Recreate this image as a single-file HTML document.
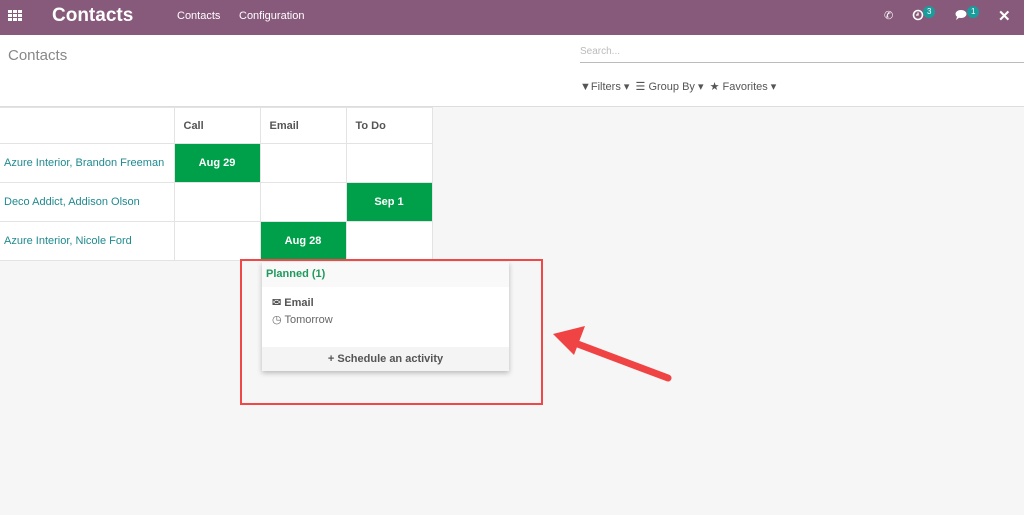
<!DOCTYPE html>
<html><head><style>
body{margin:0;width:1024px;height:515px;background:#f6f6f6;font-family:"Liberation Sans",sans-serif;position:relative;overflow:hidden;font-size:11px}
.nav{position:absolute;left:0;top:0;width:1024px;height:35px;background:#875a7b;color:#fff}
.abs{position:absolute}
.cp{position:absolute;left:0;top:35px;width:1024px;height:71px;background:#fff;border-bottom:1px solid #ddd}
table{position:absolute;left:0;top:107px;border-collapse:collapse;background:#fff;table-layout:fixed;width:432px}
td{border:1px solid #e3e3e3;padding:0;height:39px;font-size:11px;box-sizing:border-box}
th{border:1px solid #e3e3e3;height:36px;text-align:left;padding:0 0 0 9px;font-size:11px;color:#555;box-sizing:border-box}
.n{color:#1f8a8f;padding-left:4px;border-left:none}
.g{background:#00a04a;color:#fff;text-align:center;font-weight:bold}
.badge{position:absolute;background:#1b9c9c;color:#fff;border-radius:8px;font-size:8px;height:12px;line-height:12px;padding:0 4px}
</style></head><body>
<div class="nav">
 <svg class="abs" style="left:8px;top:10px" width="14" height="11"><g fill="#fff"><rect x="0" y="0" width="4" height="3"/><rect x="5" y="0" width="4" height="3"/><rect x="10" y="0" width="4" height="3"/><rect x="0" y="4" width="4" height="3"/><rect x="5" y="4" width="4" height="3"/><rect x="10" y="4" width="4" height="3"/><rect x="0" y="8" width="4" height="3"/><rect x="5" y="8" width="4" height="3"/><rect x="10" y="8" width="4" height="3"/></g></svg>
 <div class="abs" style="left:52px;top:5px;font-size:19px;font-weight:bold">Contacts</div>
 <div class="abs" style="left:177px;top:10px;font-size:11px">Contacts</div>
 <div class="abs" style="left:239px;top:10px;font-size:11px">Configuration</div>
 <div class="abs" style="left:884px;top:9px;font-size:11px">&#9990;</div>
 <svg class="abs" style="left:912px;top:9px" width="12" height="12"><circle cx="6" cy="6" r="4.5" fill="none" stroke="#fff" stroke-width="1.6"/><path d="M6 3.5V6H4" stroke="#fff" stroke-width="1.3" fill="none"/></svg>
 <div class="badge" style="left:923px;top:6px">3</div>
 <svg class="abs" style="left:955px;top:9px" width="14" height="12"><ellipse cx="6" cy="5" rx="5.5" ry="4" fill="#fff"/><path d="M2 8 L1 11 L5 8z" fill="#fff"/></svg>
 <div class="badge" style="left:967px;top:6px">1</div>
 <div class="abs" style="left:998px;top:7px;font-size:15px;font-weight:bold">&#x2715;</div>
</div>
<div class="cp">
 <div class="abs" style="left:8px;top:12px;font-size:15px;color:#888">Contacts</div>
 <div class="abs" style="left:580px;top:11px;width:444px;border-bottom:1px solid #bbb;height:16px;color:#bbb;font-size:10px">Search...</div>
 <div class="abs" style="left:580px;top:45px;color:#555;font-size:11px">&#9660;Filters &#9662; &nbsp;&#9776; Group By &#9662; &nbsp;&#9733; Favorites &#9662;</div>
</div>
<table>
<colgroup><col style="width:174px"><col style="width:86px"><col style="width:86px"><col style="width:86px"></colgroup>
<tr><th style="border-left:none"></th><th>Call</th><th>Email</th><th>To Do</th></tr>
<tr><td class="n">Azure Interior, Brandon Freeman</td><td class="g">Aug 29</td><td></td><td></td></tr>
<tr><td class="n">Deco Addict, Addison Olson</td><td></td><td></td><td class="g">Sep 1</td></tr>
<tr><td class="n">Azure Interior, Nicole Ford</td><td></td><td class="g">Aug 28</td><td></td></tr>
</table>
<div class="abs" style="left:262px;top:262px;width:247px;height:109px;background:#fff;box-shadow:0 2px 5px rgba(0,0,0,.25)">
 <div style="height:25px;background:#f9f9f9;color:#1f9a5c;font-weight:bold;line-height:24px;padding-left:4px">Planned (1)</div>
 <div class="abs" style="left:10px;top:34px;color:#555;font-weight:bold">&#9993; Email</div>
 <div class="abs" style="left:10px;top:51px;color:#666">&#9719; Tomorrow</div>
 <div class="abs" style="left:0;top:85px;width:247px;height:24px;background:#f4f4f4;text-align:center;line-height:24px;color:#555;font-weight:bold">+ Schedule an activity</div>
</div>
<div class="abs" style="left:240px;top:259px;width:299px;height:142px;border:2px solid #f04848"></div>
<svg class="abs" style="left:0;top:0" width="1024" height="515"><line x1="668" y1="378" x2="575" y2="343" stroke="#f04444" stroke-width="7" stroke-linecap="round"/><path d="M553 334 L585 326 L574 355 Z" fill="#f04444"/></svg>
</body></html>
